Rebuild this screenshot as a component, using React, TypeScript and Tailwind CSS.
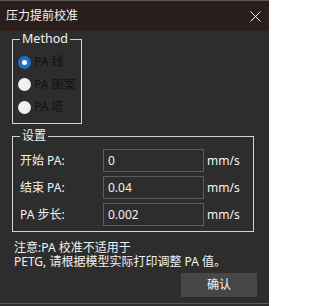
import React from "react";

const font = { fontFamily: '"Noto Sans", "Noto Sans CJK SC", sans-serif' };

function Radio({ checked, label }: { checked?: boolean; label: string }) {
  return (
    <div className="flex h-[22px] items-center">
      {checked ? (
        <span className="flex h-[13px] w-[13px] items-center justify-center rounded-full bg-[#1f6fc8]">
          <span className="h-[5px] w-[5px] rounded-full bg-white" />
        </span>
      ) : (
        <span className="h-[13px] w-[13px] rounded-full bg-[#f0f0f0]" />
      )}
      <span className="ml-[3px] text-[12px] leading-[14px] text-[#111111]">{label}</span>
    </div>
  );
}

function Row({ label, value }: { label: string; value: string }) {
  return (
    <div className="flex h-[23px] items-center">
      <span className="w-[83px] text-[12px] leading-[14px] text-[#f2f2f2]">{label}</span>
      <div className="flex h-[23px] w-[101px] items-center border border-[#5c5c5c] pl-[4px] text-[12px] leading-[14px] text-[#f2f2f2]">
        {value}
      </div>
      <span className="ml-[3px] text-[12px] leading-[14px] text-[#f2f2f2]">mm/s</span>
    </div>
  );
}

export default function App() {
  return (
    <div className="flex h-[306px] w-[269px] flex-col bg-[#2d2d2d]" style={font}>
      <div className="flex h-[31px] items-center justify-between border-t border-[#5a5a5a] bg-[#2a1f1c] pl-[6px] pr-[8px]">
        <span className="text-[12px] leading-[14px] text-[#f4f4f4]">压力提前校准</span>
        <svg width="11" height="11" viewBox="0 0 11 11" className="mr-[0px]">
          <path d="M0.5 0.5 L10.5 10.5 M10.5 0.5 L0.5 10.5" stroke="#f4f4f4" strokeWidth="1" />
        </svg>
      </div>

      <div className="relative ml-[12px] mt-[8px] h-[85px] w-[70px] border border-[#d4d4d4] pl-[5px] pt-[11px]">
        <span className="absolute -top-[8px] left-[7px] bg-[#2d2d2d] px-[2px] text-[12.5px] leading-[14px] text-[#f4f4f4]">
          Method
        </span>
        <div className="flex flex-col gap-[0.5px]">
          <Radio checked label="PA 线" />
          <Radio label="PA 图案" />
          <Radio label="PA 塔" />
        </div>
      </div>

      <div className="relative ml-[12px] mt-[12px] h-[96px] w-[242px] border border-[#d4d4d4] pl-[7px] pt-[12px]">
        <span className="absolute -top-[8px] left-[7px] bg-[#2d2d2d] px-[2px] text-[12px] leading-[14px] text-[#f4f4f4]">
          设置
        </span>
        <div className="flex flex-col gap-[4px]">
          <Row label="开始 PA:" value="0" />
          <Row label="结束 PA:" value="0.04" />
          <Row label="PA 步长:" value="0.002" />
        </div>
      </div>

      <div className="ml-[14px] mt-[9px] text-[12px] leading-[14px] text-[#f2f2f2]">
        <div>注意:PA 校准不适用于</div>
        <div>PETG, 请根据模型实际打印调整 PA 值。</div>
      </div>

      <div className="mr-[12px] mt-[4px] flex justify-end">
        <div className="flex h-[24px] w-[76px] items-center justify-center bg-[#474747] text-[12px] leading-[14px] text-[#f4f4f4]">
          确认
        </div>
      </div>

      <div className="flex-1" />
      <div className="mb-[2px] h-px bg-[#5a5a5a]" />
    </div>
  );
}
